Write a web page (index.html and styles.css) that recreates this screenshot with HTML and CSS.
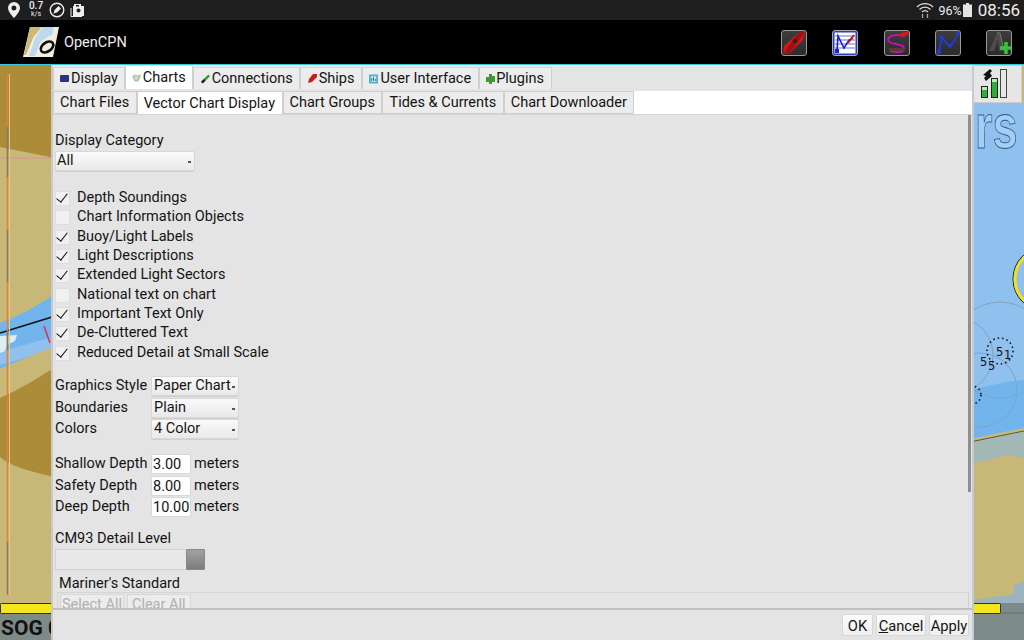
FILE: index.html
```html
<!DOCTYPE html>
<html lang="en">
<head>
<meta charset="utf-8">
<title>OpenCPN</title>
<link rel="stylesheet" href="styles.css">
</head>
<body>
<div class="screen">
  <header class="statusbar">
    <div class="status-left">
      <svg class="ic" width="16" height="18" viewBox="0 0 16 18"><path d="M8 1a6 6 0 0 0-6 6c0 4 6 10 6 10s6-6 6-10a6 6 0 0 0-6-6zm0 8.500a2.500 2.500 0 1 1 0-5 2.500 2.500 0 0 1 0 5z" fill="#eee"/></svg>
      <div class="speed"><b>0.7</b><i>k/s</i></div>
      <svg class="ic" width="16" height="16" viewBox="0 0 16 16"><circle cx="8" cy="8" r="6.800" fill="none" stroke="#eee" stroke-width="1.400"/><path d="M4.500 11.500l1-3.500 4-4 2.500 2.500-4 4z" fill="#eee"/></svg>
      <svg class="ic" width="15" height="14" viewBox="0 0 15 14"><path d="M4 3V1h7v2h3v10H3V3z" fill="#eee"/><path d="M1 5v8.500h11" fill="none" stroke="#eee"/><rect x="6" y="2" width="3" height="1.500" fill="#222"/><circle cx="8.500" cy="7.500" r="2" fill="#222"/></svg>
    </div>
    <div class="status-right">
      <svg width="18" height="18" viewBox="0 0 18 18"><path d="M1 6a11 11 0 0 1 16 0M3.500 8.500a7.500 7.500 0 0 1 11 0M6 11a4 4 0 0 1 6 0" fill="none" stroke="#ddd" stroke-width="1.300"/><path d="M6.500 13v4M11.500 13v4" stroke="#aaa" stroke-width="1.200"/></svg>
      <span class="batt">96%</span>
      <svg width="9" height="14" viewBox="0 0 9 14"><path d="M3 0h3v1.500h3V14H0V1.500h3z" fill="#e4e4e4"/></svg>
      <span class="clock">08:56</span>
    </div>
  </header>

  <nav class="actionbar">
    <svg class="logo" width="37" height="32" viewBox="0 0 37 32">
      <path d="M7 1h29L30 31H0z" fill="#f2eee0"/>
      <path d="M7 1h11c-2 6-8 8-9 14l-6 14H1z" fill="#cfb87a"/>
      <path d="M19 1c-2 6-7 9-8 14l-5 15h6l5-13c3-4 9-7 12-8l2-8z" fill="#bcd9ee"/>
      <ellipse cx="24" cy="21" rx="7" ry="4.500" transform="rotate(-35 24 21)" fill="none" stroke="#111" stroke-width="2.600"/>
    </svg>
    <span class="app-title">OpenCPN</span>
    <div class="tools">
      <span class="tool"><svg width="24" height="24" viewBox="0 0 24 24"><path d="M1 23l1-8L16 2l7-1-2 8L8 22z" fill="#d01818"/><path d="M1 23L16 2l7-1-15 21z" fill="#9c1212"/><circle cx="13" cy="10" r="2" fill="#222"/></svg></span>
      <span class="tool tool-blue"><svg width="24" height="24" viewBox="0 0 24 24"><rect width="24" height="24" fill="#fff" stroke="#2a3fb8" stroke-width="3"/><path d="M2 5h20M2 9h20M2 13h20M2 17h20" stroke="#9aa3d8" stroke-width="1.400"/><path d="M4 20L5 5l6 12 5-8 4-2" fill="none" stroke="#2222cc" stroke-width="1.600"/><path d="M15 12l6-8" stroke="#d01818" stroke-width="2"/><rect x="2" y="18" width="4" height="4" fill="#2222cc"/></svg></span>
      <span class="tool"><svg width="24" height="24" viewBox="0 0 24 24"><path d="M20 5C12 3 3 4 3 9s16 3 16 8-8 5-14 3" fill="none" stroke="#c80fc0" stroke-width="1.800"/><path d="M12 4l7-3 5 0-1 3-7 2z" fill="#d01818"/><path d="M4 17h15v3H4z" fill="#5a3a34"/></svg></span>
      <span class="tool"><svg width="24" height="24" viewBox="0 0 24 24"><path d="M3 21L6 7l8 9 9-14" fill="none" stroke="#1f3be0" stroke-width="1.800"/><rect x="1" y="19" width="4" height="4" fill="#1f3be0"/><rect x="4" y="5" width="3" height="3" fill="#1f3be0"/><rect x="12" y="13" width="3" height="3" fill="#1f3be0"/><path d="M24 0l-5 2 4 3z" fill="#1f3be0"/></svg></span>
      <span class="tool"><svg width="24" height="24" viewBox="0 0 24 24"><path d="M2 20L10 2h3l4 18h-5l-1-12-4 12z" fill="#4c4c4c"/><path d="M10 2h3l4 18" fill="none" stroke="#777"/><path d="M19 11v12M13 17h12" stroke="#35c43a" stroke-width="3.500"/></svg></span>
    </div>
  </nav>

  <main class="stage">
    <svg class="map" width="1024" height="575" viewBox="0 65 1024 575">
      <rect x="0" y="65" width="1024" height="575" fill="#c8b878"/>
      <path d="M0 65H60V159L0 147z" fill="#ac8b39"/>
      <path d="M0 158H60" stroke="#d49a9a" stroke-width="1.500"/>
      <path d="M0 323C20 315 35 308 60 290V341C40 352 20 360 0 369z" fill="#72b5ec"/>
      <path d="M0 352C20 346 35 342 60 335V344C40 352 20 360 0 365z" fill="#8fc0ee"/>
      <path d="M0 336l17 -1 -2 6 -8 4 -2 6 -5 2z" fill="#dceef0"/>
      <path d="M0 333l52-16" stroke="#111" stroke-width="1.500"/>
      <path d="M44 326l6 17" stroke="#e03050" stroke-width="1.500"/>
      <path d="M0 398C20 389 35 380 60 364V478C30 472 10 466 0 457z" fill="#ac8b39"/>
      <path d="M9.500 74V595" stroke="#dccb8c" stroke-width="1"/>
      <path d="M7.500 74V595" stroke="#e58030" stroke-width="1.500"/>
      <path d="M7.500 127v50M7.500 230v52M7.500 330v20M7.500 542v52" stroke="#7c7c70" stroke-width="1.500"/>
      <rect x="960" y="103" width="64" height="345" fill="#8fc0ee"/>
      <path d="M960 391C985 388 1000 381 1024 380V428L960 441z" fill="#72b5ec"/>
      <g fill="none" stroke="#7fa3c4" stroke-width="1">
        <circle cx="1000" cy="350" r="48"/><circle cx="955" cy="355" r="38"/><circle cx="980" cy="390" r="37"/>
      </g>
      <path d="M960 441L1024 428v5l-64 13z" fill="#c8b878"/>
      <path d="M960 444L1024 431" stroke="#3e5a6a" stroke-width="1"/>
      <path d="M960 445L1024 432V458C1015 457 1012 455 1007 455 995 458 985 462 975 462 970 462 965 461 960 461z" fill="#a3b7b5"/>
      <path d="M1014 585l10-4v22h-50v-3l40-6z" fill="#9cb4c0"/>
      <circle cx="1045" cy="279" r="32" fill="none" stroke="#111" stroke-width="1"/>
      <circle cx="1045" cy="279" r="30" fill="none" stroke="#f0e020" stroke-width="3"/>
      <circle cx="1000" cy="351" r="13" fill="none" stroke="#111" stroke-width="1.600" stroke-dasharray="1.500 3"/>
      <circle cx="972" cy="395" r="9" fill="none" stroke="#111" stroke-width="1.600" stroke-dasharray="1.500 3"/>
      <text class="map-depth" x="996" y="356">5</text><text class="map-depth" x="1004" y="359">1</text>
      <text class="map-depth" x="980" y="366">5</text><text class="map-depth" x="988" y="370">5</text>
      <text class="map-name" transform="translate(975 148) scale(1 1.380)">rs</text>
      <rect x="0" y="603" width="1024" height="37" fill="#7c8b88"/>
      <path d="M0 613H1024" stroke="#66716f"/>
      <rect x="0.500" y="603.500" width="1000" height="10" rx="1" fill="#f4e61c" stroke="#26304a"/>
      <text class="map-sog" x="1" y="635">SOG 0</text>
    </svg>

    <aside class="meter">
      <svg width="28" height="31" viewBox="0 0 28 31"><path d="M2 7l7-6 2 2-2 2 2 3-6 5-2-3 2-2z" fill="#111"/><rect x="0.500" y="18.500" width="6" height="11" fill="#2fae34" stroke="#222"/><rect x="1" y="19" width="5" height="3" fill="#bfe8bf"/><rect x="10.500" y="10.500" width="6" height="19" fill="#2fae34" stroke="#222"/><rect x="11" y="11" width="5" height="3" fill="#bfe8bf"/><rect x="19.500" y="1.500" width="6" height="28" fill="#e6e6e6" stroke="#444"/></svg>
    </aside>

    <section class="dialog">
      <div class="tabs tabs-top">
        <span class="tab"><i class="ti ti-display"></i>Display</span>
        <span class="tab tab-charts is-active"><svg class="tsvg" width="9" height="8" viewBox="0 0 10 8"><path d="M0 2l3-2 4 1 3-1-1 4-2 4H3z" fill="#9cc6c8"/><path d="M3 1l4 1-1 4H3z" fill="#e8d8a0"/></svg>Charts</span>
        <span class="tab tab-conn"><svg class="tsvg" width="9" height="10" viewBox="0 0 10 10"><path d="M1 9l8-8" stroke="#2a9a30" stroke-width="2.500"/><path d="M1 9l3-3" stroke="#222" stroke-width="2.500"/></svg>Connections</span>
        <span class="tab tab-ships"><svg class="tsvg" width="9" height="9" viewBox="0 0 9 9"><path d="M0 9l1-4 4-5h4v3L4 8z" fill="#c81c20"/></svg>Ships</span>
        <span class="tab tab-ui"><svg class="tsvg" width="9" height="10" viewBox="0 0 10 10"><rect width="10" height="10" fill="#54b0cc"/><path d="M2 2h6v6H2z" fill="#cfe8ee"/><path d="M3 7V4M5 7V3M7 7V5" stroke="#2a5a88"/></svg>User Interface</span>
        <span class="tab tab-plugins"><svg class="tsvg" width="9" height="10" viewBox="0 0 9 10"><path d="M3 0h3v2h3v6H6v2H3V8H0V3h3z" fill="#3c9a30"/></svg>Plugins</span>
      </div>
      <div class="tabs tabs-sub">
        <span class="tab">Chart Files</span>
        <span class="tab is-active">Vector Chart Display</span>
        <span class="tab">Chart Groups</span>
        <span class="tab">Tides &amp; Currents</span>
        <span class="tab">Chart Downloader</span>
      </div>

      <div class="panel">
        <div class="scroll-track"><div class="scroll-thumb"></div></div>
        <div class="label cat-label">Display Category</div>
        <div class="select select-cat">All</div>

        <ul class="checks">
          <li class="check on">Depth Soundings</li>
          <li class="check">Chart Information Objects</li>
          <li class="check on">Buoy/Light Labels</li>
          <li class="check on">Light Descriptions</li>
          <li class="check on">Extended Light Sectors</li>
          <li class="check">National text on chart</li>
          <li class="check on">Important Text Only</li>
          <li class="check on">De-Cluttered Text</li>
          <li class="check on">Reduced Detail at Small Scale</li>
        </ul>

        <div class="form form-sel">
          <span class="label">Graphics Style</span><div class="select">Paper Chart</div>
          <span class="label">Boundaries</span><div class="select">Plain</div>
          <span class="label">Colors</span><div class="select">4 Color</div>
        </div>

        <div class="form form-depth">
          <span class="label">Shallow Depth</span><div class="input">3.00</div><span class="label">meters</span>
          <span class="label">Safety Depth</span><div class="input">8.00</div><span class="label">meters</span>
          <span class="label">Deep Depth</span><div class="input">10.00</div><span class="label">meters</span>
        </div>

        <div class="label cm93">CM93 Detail Level</div>
        <div class="slider"><div class="slider-thumb"></div></div>

        <div class="label mariner">Mariner's Standard</div>
        <div class="groupbox">
          <span class="btn-off">Select All</span><span class="btn-off">Clear All</span>
        </div>
      </div>

      <footer class="actions">
        <span class="btn btn-ok">OK</span>
        <span class="btn btn-cancel"><u>C</u>ancel</span>
        <span class="btn btn-apply">Apply</span>
      </footer>
    </section>
  </main>
</div>
</body>
</html>
```
FILE: styles.css
```css
* { box-sizing: border-box; }
html, body { margin: 0; padding: 0; }
body { font-family: Roboto, "Liberation Sans", sans-serif; background: #000; }
.screen { width: 1024px; height: 640px; display: flex; flex-direction: column; overflow: hidden; }

.statusbar { height: 20px; background: #1e1e1e; color: #eee; display: flex; justify-content: space-between; align-items: center; padding: 0 4px 0 6px; flex: none; }
.status-left, .status-right { display: flex; align-items: center; }
.status-left { gap: 5px; }
.speed { display: flex; flex-direction: column; align-items: center; width: 14px; line-height: 8px; font-size: 9px; margin: 0 1px 0 2px; }
.speed b { font-weight: 500; font-size: 10px; }
.speed i { font-style: normal; font-size: 7px; }
.batt { font-size: 12.500px; margin: 0 1px 0 4px; }
.clock { font-size: 17px; margin-left: 6px; }

.actionbar { height: 45px; background: #000; border-bottom: 1px solid #35c8d8; display: flex; align-items: center; padding-left: 23px; flex: none; }
.logo { margin-top: -1px; }
.app-title { color: #eee; font-size: 14.500px; margin-left: 4px; }
.tools { margin-left: auto; display: flex; gap: 25.250px; padding-right: 12px; margin-top: 1px; }
.tool { width: 26px; height: 26px; border: 1px solid #999; border-radius: 3px; background: linear-gradient(#3c3c3c, #2c2c2c); display: block; line-height: 0; overflow: hidden; }
.tool-blue { border-color: #aab; }

.stage { flex: 1; position: relative; background: #c8b878; }
.map { position: absolute; left: 0; top: 0; display: block; }
.map-depth { font: 11.500px "DejaVu Sans", sans-serif; fill: #111; }
.map-name { font: bold 45px "Liberation Sans", sans-serif; fill: #a4cef4; stroke: #2d5a88; stroke-width: 0.600; }
.map-sog { font: bold 21px Roboto, sans-serif; fill: #111; }

.meter { position: absolute; left: 974px; top: 0; width: 48px; height: 38px; background: #e6e6e6; border: 1px solid #ccc; border-left: none; display: flex; align-items: flex-start; padding: 2px 0 0 7px; }

.dialog { position: absolute; left: 51px; top: 0; width: 923px; height: 575px; background: #e4e4e4; border-left: 2px solid #c9c9c9; border-right: 2px solid #c6cad2; border-top: 1px solid #eee; display: flex; flex-direction: column; color: #141414; font-size: 14.500px; }

.tabs { display: flex; flex: none; }
.tabs-top { height: 24px; background: #e4e4e4; align-items: flex-end; margin-bottom: 1px; }
.tabs-sub { height: 23px; background: #fff; }
.tab { display: flex; align-items: center; height: 22px; border: 1px solid #cfcfcf; border-bottom: none; background: #ececec; white-space: nowrap; }
.tabs-top .tab { padding: 0 6px; border-top-color: #d8d8d8; margin-bottom: 1px; }
.tabs-top .tab.is-active { background: #fff; height: 24px; }
.tabs-top .tab-conn { padding-left: 7px; }
.tabs-top .tab-ships { padding: 0 7px; }
.tabs-top .tab-ui { padding-right: 7px; }
.tabs-top .tab-plugins { padding-right: 7px; }
.tab-plugins .tsvg { margin-right: 1px; }
.tabs-sub .tab { height: 23px; padding: 0 6.500px 0 6px; border-bottom: 1px solid #d0d0d0; }
.tabs-sub .tab.is-active { background: #fff; border-bottom: none; }
.ti { display: block; }
.ti-display { width: 9px; height: 7px; background: #26348c; border-radius: 1px; margin-right: 2px; }
.tsvg { margin-right: 2px; flex: none; }

.panel { flex: 1; min-height: 0; position: relative; padding: 17px 0 0 2px; border-top: 1px solid #d4d4d4; overflow: hidden; border-bottom: 2px solid #bfbfbf; }
.label { line-height: 18px; white-space: nowrap; }
.scroll-track { position: absolute; right: 1px; top: 0; width: 3px; height: 377px; }
.scroll-thumb { width: 100%; height: 100%; background: #8f8f8f; }

.select { height: 20px; line-height: 18px; background: linear-gradient(#fafafa, #e9e9e9); border: 1px solid #d8d8d8; border-radius: 2px; padding: 0 1px; position: relative; box-shadow: 0 1px 0 #cfcfcf; }
.select::after { content: ""; position: absolute; right: 3px; top: 9px; width: 3px; height: 2px; background: #555; }
.select-cat { width: 140px; margin-top: 1px; }

.checks { list-style: none; margin: 17px 0 0; padding: 0; }
.check { height: 19.350px; line-height: 19.350px; padding-left: 22px; position: relative; }
.check::before { content: ""; position: absolute; left: 0; top: 3px; width: 13px; height: 13px; background: #f0f0f0; border: 1px solid #dedede; }
.check.on::after { content: ""; position: absolute; left: 4px; top: 3px; width: 5px; height: 10px; border: solid #111; border-width: 0 1.200px 1.200px 0; transform: rotate(38deg); }

.form { display: grid; align-items: center; row-gap: 1.500px; }
.form-sel { grid-template-columns: 96px 88px; grid-auto-rows: 20px; margin-top: 14px; }
.form-sel .select { padding-left: 2px; }
.form-depth { grid-template-columns: 96px 40px auto; grid-auto-rows: 20px; margin-top: 15px; justify-content: start; }
.form-depth .label:nth-child(3n) { margin-left: 3px; }
.input { height: 20px; line-height: 19px; background: #fff; border: 1px solid #d8d8d8; border-radius: 2px; padding-left: 1px; }
.cm93 { margin-top: 13px; }
.slider { width: 150px; height: 21px; margin: 1px 0 0; background: #e8e8e8; border: 1px solid #d2d2d2; display: flex; justify-content: flex-end; }
.slider-thumb { width: 19px; background: linear-gradient(#a2a2a2, #7c7c7c); border: 1px solid #888; margin: -1px -1px -1px 0; border-radius: 1px; }
.mariner { margin: 5px 0 0 4px; }
.groupbox { margin: -1px 3px 0 2px; border: 1px solid #d6d6d6; border-right-color: #d0d0d0; padding: 1px 0 0 2px; display: flex; gap: 3px; height: 40px; }
.btn-off { height: 30px; background: #ececec; border: 1px solid #d8d8d8; color: #b0b0b0; line-height: 19px; padding: 0 1px; }
.btn-off + .btn-off { padding: 0 4px; }

.actions { height: 30px; flex: none; display: flex; justify-content: flex-end; gap: 3px; padding: 4px 3px 0 0; }
.btn { height: 22px; line-height: 22px; text-align: center; background: linear-gradient(#fbfbfb, #efefef); border: 1px solid #d8d8d8; border-radius: 2px; font-size: 14.700px; }
.btn-ok { width: 31px; }
.btn-cancel { width: 50px; }
.btn-apply { width: 40px; }
```
